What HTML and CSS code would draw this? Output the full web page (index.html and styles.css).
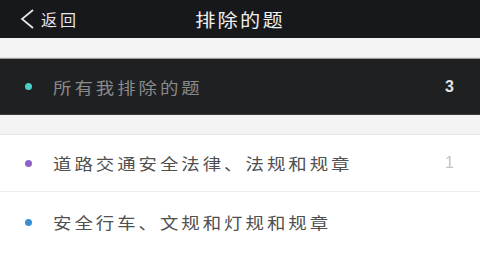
FILE: index.html
```html
<!DOCTYPE html>
<html lang="zh">
<head>
    <meta charset="UTF-8">
    <meta name="viewport" content="width=device-width, initial-scale=1.0">
    <title>排除的题</title>
    <link rel="stylesheet" href="styles.css">
</head>
<body>
    <div class="header">
        <div class="back">
            <svg class="back-icon" width="16" height="22" viewBox="0 0 16 22">
                <path d="M14 2 L3 11 L14 20" fill="none" stroke="#e8e8e8" stroke-width="1.7"/>
            </svg>
            <span>返回</span>
        </div>
        <div class="title"><span>排除的题</span></div>
    </div>

    <div class="gap"></div>

    <div class="row row-dark">
        <span class="dot dot-cyan"></span>
        <span class="label"><span>所有我排除的题</span></span>
        <span class="count">3</span>
    </div>

    <div class="gap"></div>

    <div class="row">
        <span class="dot dot-purple"></span>
        <span class="label"><span>道路交通安全法律、法规和规章</span></span>
        <span class="count">1</span>
    </div>

    <div class="row row-last">
        <span class="dot dot-blue"></span>
        <span class="label"><span>安全行车、文规和灯规和规章</span></span>
        <span class="count"></span>
    </div>
</body>
</html>
```

FILE: styles.css
```css
body {
    margin: 0;
    width: 480px;
    height: 270px;
    overflow: hidden;
    background: #fff;
    font-family: "Noto Sans CJK SC", "Noto Sans", sans-serif;
}
.header {
    height: 38px;
    background: #17181c;
    display: flex;
    align-items: center;
    position: relative;
}
.back {
    display: flex;
    align-items: center;
    padding-left: 19px;
    color: #e6e6e6;
    font-size: 16px;
    letter-spacing: 3px;
}
.back-icon {
    margin-right: 6px;
}
.title {
    position: absolute;
    left: 0;
    right: 0;
    text-align: center;
    color: #eee;
    font-size: 18px;
    letter-spacing: 2px;
    pointer-events: none;
}
.title span {
    display: inline-block;
    transform: scaleX(1.12);
}
.gap {
    height: 19px;
    background: #f4f4f5;
    border-bottom: 1px solid #e4e4e4;
}
.row {
    display: flex;
    align-items: center;
    height: 56px;
    padding: 0 26px 0 25px;
    background: #fff;
    border-bottom: 1px solid #ececec;
}
.row-dark {
    background: #1f2022;
    border-top: 1px solid #9a9a9a;
    border-bottom: 1px solid #3a3a3a;
    height: 55px;
}
.row-last {
    border-bottom: none;
    margin-top: 2px;
}
.dot {
    width: 7px;
    height: 7px;
    border-radius: 50%;
    margin-right: 21px;
}
.dot-cyan { background: #4ccfc4; }
.dot-purple { background: #8b63c8; }
.dot-blue { background: #3a8fd4; }
.label {
    flex: 1;
    font-size: 16px;
    letter-spacing: 2.6px;
    color: #505050;
}
.label span {
    display: inline-block;
    transform: scaleX(1.15);
    transform-origin: left center;
}
.row-dark .label {
    color: #8a8a8a;
}
.count {
    font-size: 16px;
    color: #c4c4c4;
    font-family: "Liberation Sans", sans-serif;
}
.row-dark .count {
    color: #e2e2e2;
    font-weight: bold;
}
```
